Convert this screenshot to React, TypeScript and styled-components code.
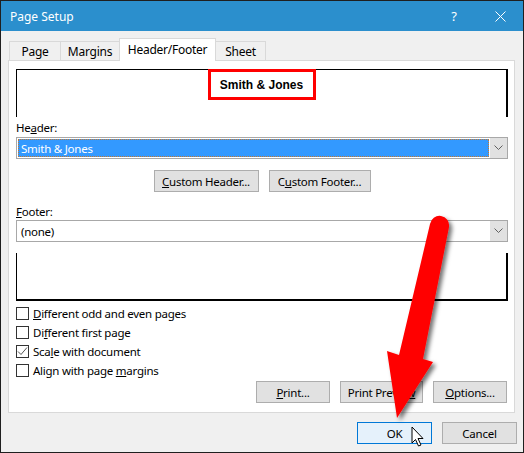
import { createGlobalStyle } from "styled-components";
import styled from "styled-components";

const GlobalStyle = createGlobalStyle`
  html, body {
    margin: 0;
    padding: 0;
    background: #ffffff;
  }
`;

const Window = styled.div`
  position: relative;
  width: 524px;
  height: 453px;
  box-sizing: border-box;
  border: 1px solid #1f1f1f;
  background: #f0f0f0;
  display: flex;
  flex-direction: column;
  font-family: "Segoe UI", "Noto Sans", sans-serif;
  font-size: 11.5px;
  letter-spacing: -0.25px;
  color: #000;
  overflow: hidden;
`;

const TitleBar = styled.div`
  height: 30px;
  flex: none;
  display: flex;
  align-items: center;
  background: #2b8fcd;
  color: #fff;
  padding-left: 9px;
`;

const TitleText = styled.div`
  flex: 1;
  font-size: 12px;
  letter-spacing: 0;
`;

const TitleButton = styled.div`
  width: 46px;
  height: 30px;
  display: flex;
  align-items: center;
  justify-content: center;
  font-size: 13px;
`;

const Body = styled.div`
  padding: 7px 8px 0 7px;
  display: flex;
  flex-direction: column;
`;

const TabRow = styled.div`
  display: flex;
  align-items: flex-end;
  height: 23px;
  padding-left: 1px;
  margin-bottom: -1px;
  position: relative;
  z-index: 1;
`;

const Tab = styled.div<{ $active?: boolean; $width: number }>`
  box-sizing: border-box;
  width: ${(p) => p.$width}px;
  height: ${(p) => (p.$active ? 23 : 20)}px;
  margin-left: -1px;
  &:first-child {
    margin-left: 0;
  }
  border: 1px solid #d9d9d9;
  border-bottom: ${(p) => (p.$active ? "none" : "1px solid #d9d9d9")};
  background: ${(p) => (p.$active ? "#fff" : "#f0f0f0")};
  display: flex;
  align-items: center;
  justify-content: center;
  font-size: 12px;
  padding-bottom: ${(p) => (p.$active ? 2 : 0)}px;
`;

const Panel = styled.div`
  box-sizing: border-box;
  height: 353px;
  background: #fff;
  border: 1px solid #d9d9d9;
  padding: 8px 6px 0 7px;
  display: flex;
  flex-direction: column;
`;

const Preview = styled.div<{ $kind: "header" | "footer" }>`
  box-sizing: border-box;
  height: 48px;
  margin-top: ${(p) => (p.$kind === "footer" ? 11 : 0)}px;
  border-left: 1px solid #000;
  border-right: 2px solid #000;
  border-top: ${(p) => (p.$kind === "header" ? "1px solid #000" : "none")};
  border-bottom: ${(p) => (p.$kind === "footer" ? "2px solid #000" : "none")};
  display: flex;
  justify-content: center;
  align-items: flex-start;
`;

const Highlight = styled.div`
  box-sizing: border-box;
  width: 108px;
  height: 31px;
  margin-top: -1px;
  border: 3px solid #ff0000;
  display: flex;
  align-items: center;
  justify-content: center;
  font-family: "Liberation Sans", Arial, sans-serif;
  font-weight: bold;
  font-size: 12px;
  letter-spacing: 0;
`;

const FieldLabel = styled.div<{ $top: number }>`
  line-height: 16px;
  margin-top: ${(p) => p.$top}px;
`;

const Select = styled.div<{ $top?: number }>`
  box-sizing: border-box;
  height: 22px;
  margin-top: ${(p) => p.$top ?? 0}px;
  border: 1px solid #a8a8a8;
  display: flex;
  background: #fff;
`;

const SelectValue = styled.div<{ $selected?: boolean }>`
  flex: 1;
  margin: 1px;
  box-sizing: border-box;
  display: flex;
  align-items: center;
  padding-left: 2px;
  background: ${(p) => (p.$selected ? "#3399ff" : "#fff")};
  color: ${(p) => (p.$selected ? "#fff" : "#000")};
  border: 1px dotted ${(p) => (p.$selected ? "#c9782c" : "transparent")};
`;

const SelectArrow = styled.div`
  width: 17px;
  background: #e1e1e1;
  display: flex;
  align-items: center;
  justify-content: center;
`;

const ButtonRow = styled.div<{ $top: number; $justify: string; $right?: number }>`
  display: flex;
  justify-content: ${(p) => p.$justify};
  gap: 10px;
  margin-top: ${(p) => p.$top}px;
  margin-right: ${(p) => p.$right ?? 0}px;
`;

const Button = styled.div<{ $width: number; $default?: boolean }>`
  box-sizing: border-box;
  width: ${(p) => p.$width}px;
  height: 22px;
  border: 1px solid ${(p) => (p.$default ? "#0078d7" : "#adadad")};
  background: ${(p) => (p.$default ? "#e5f1fb" : "#e1e1e1")};
  display: flex;
  align-items: center;
  justify-content: center;
`;

const CheckList = styled.div`
  margin-top: 3px;
  display: flex;
  flex-direction: column;
`;

const CheckRow = styled.div`
  height: 19px;
  display: flex;
  align-items: center;
  gap: 4px;
`;

const Box = styled.div`
  box-sizing: border-box;
  width: 13px;
  height: 13px;
  border: 1px solid #333;
  background: #fff;
  display: flex;
  align-items: center;
  justify-content: center;
`;

const Footer = styled.div`
  display: flex;
  justify-content: flex-end;
  gap: 10px;
  margin-top: 9px;
  padding-right: 6px;
`;

const Overlay = styled.svg`
  position: absolute;
  left: -1px;
  top: -1px;
  pointer-events: none;
`;

const Chevron = () => (
  <svg width="9" height="6" viewBox="0 0 9 6">
    <polyline points="0.5,0.5 4.5,4.5 8.5,0.5" fill="none" stroke="#606060" strokeWidth="1" />
  </svg>
);

const Check = () => (
  <svg width="11" height="11" viewBox="0 0 11 11">
    <polyline points="1,5.5 4,8.5 10,1.5" fill="none" stroke="#555" strokeWidth="1" />
  </svg>
);

const checks = [
  { label: <><u>D</u>ifferent odd and even pages</>, on: false },
  { label: <>Di<u>f</u>ferent first page</>, on: false },
  { label: <>Sca<u>l</u>e with document</>, on: true },
  { label: <>Align with page <u>m</u>argins</>, on: false },
];

export default function App() {
  return (
    <>
      <GlobalStyle />
      <Window>
        <TitleBar>
          <TitleText>Page Setup</TitleText>
          <TitleButton>?</TitleButton>
          <TitleButton>
            <svg width="11" height="11" viewBox="0 0 11 11">
              <path d="M0.5 0.5 L10.5 10.5 M10.5 0.5 L0.5 10.5" stroke="#fff" strokeWidth="1" />
            </svg>
          </TitleButton>
        </TitleBar>
        <Body>
          <TabRow>
            <Tab $width={52}>Page</Tab>
            <Tab $width={60}>Margins</Tab>
            <Tab $width={97} $active>Header/Footer</Tab>
            <Tab $width={51}>Sheet</Tab>
          </TabRow>
          <Panel>
            <Preview $kind="header">
              <Highlight>Smith &amp; Jones</Highlight>
            </Preview>
            <FieldLabel $top={3}>He<u>a</u>der:</FieldLabel>
            <Select $top={1}>
              <SelectValue $selected>Smith &amp; Jones</SelectValue>
              <SelectArrow><Chevron /></SelectArrow>
            </Select>
            <ButtonRow $top={11} $justify="center">
              <Button $width={105}><span><u>C</u>ustom Header...</span></Button>
              <Button $width={102}><span>C<u>u</u>stom Footer...</span></Button>
            </ButtonRow>
            <FieldLabel $top={12}><u>F</u>ooter:</FieldLabel>
            <Select>
              <SelectValue>(none)</SelectValue>
              <SelectArrow><Chevron /></SelectArrow>
            </Select>
            <Preview $kind="footer" />
            <CheckList>
              {checks.map((c, i) => (
                <CheckRow key={i}>
                  <Box>{c.on && <Check />}</Box>
                  <span>{c.label}</span>
                </CheckRow>
              ))}
            </CheckList>
            <ButtonRow $top={1} $justify="flex-end" $right={1}>
              <Button $width={74}><span><u>P</u>rint...</span></Button>
              <Button $width={83}><span>Print Previe<u>w</u></span></Button>
              <Button $width={74}><span><u>O</u>ptions...</span></Button>
            </ButtonRow>
          </Panel>
        </Body>
        <Footer>
          <Button $width={75} $default>OK</Button>
          <Button $width={75}>Cancel</Button>
        </Footer>
        <Overlay width="524" height="453" viewBox="0 0 524 453">
          <defs>
            <filter id="shadow" x="-20%" y="-20%" width="150%" height="150%">
              <feDropShadow dx="3" dy="3" stdDeviation="2" floodColor="#000" floodOpacity="0.55" />
            </filter>
          </defs>
          <path
            d="M430 224 A9.6 9.6 0 0 1 449 227 L423 359 L433 362 L397 418 L387 351 L399 355 Z"
            fill="#ff0000"
            filter="url(#shadow)"
          />
          <path
            d="M412 427 L412 443 L415.5 439.5 L418.5 446 L421 445 L418 438.5 L423 438.5 Z"
            fill="#fff"
            stroke="#000"
            strokeWidth="1"
            strokeLinejoin="round"
          />
        </Overlay>
      </Window>
    </>
  );
}
